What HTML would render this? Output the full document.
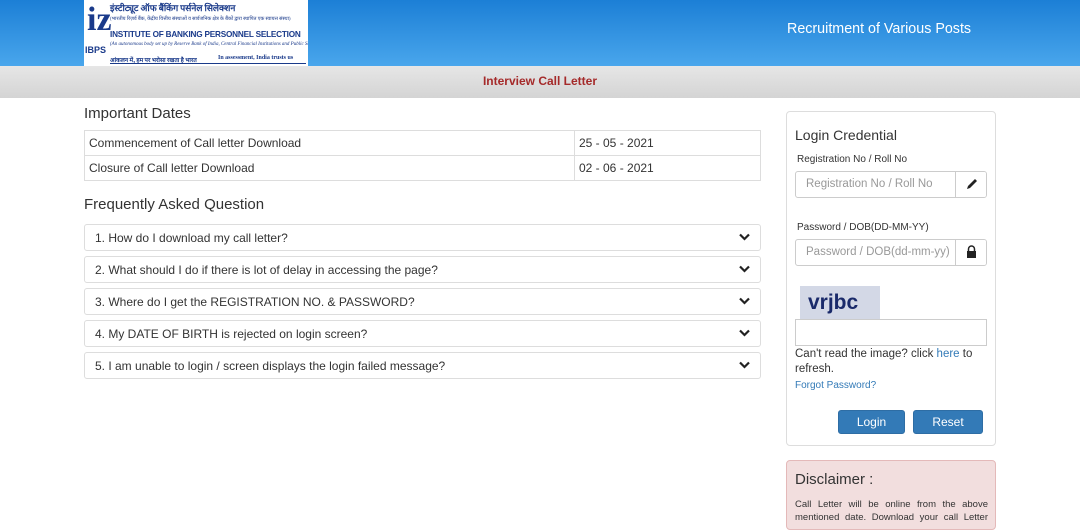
<!DOCTYPE html>
<html><head><meta charset="utf-8"><style>
*{box-sizing:border-box}
body{margin:0;width:1080px;height:520px;overflow:hidden;font-family:"Liberation Sans",Arial,sans-serif;background:#fff;color:#333}
.hdr{position:absolute;left:0;top:0;width:1080px;height:66px;background:linear-gradient(#1c7fd6,#49a6ec)}
.logo{position:absolute;left:84px;top:0;width:224px;height:66px;background:#fff;overflow:hidden}
.title{position:absolute;left:787px;top:21px;color:#fff;font-size:14.3px}
.band{position:absolute;left:0;top:66px;width:1080px;height:32px;background:linear-gradient(#e6e6e6,#d4d4d4);text-align:center;font-size:12px;font-weight:bold;color:#a52a2a;line-height:30px}
h3{position:absolute;margin:0;font-weight:normal;font-size:15px;color:#333}
table{position:absolute;left:84px;top:130px;width:677px;border-collapse:collapse;font-size:12px}
td{border:1px solid #ddd;padding:0 4px;height:25px}
.faq{position:absolute;left:84px;width:677px;height:27px;border:1px solid #ddd;border-radius:3px;font-size:12px;padding:6px 10px}
.faq svg{position:absolute;right:10px;top:8px}
.panel{position:absolute;left:786px;top:111px;width:210px;height:335px;border:1px solid #ddd;border-radius:4px}
.lbl{position:absolute;font-size:10px;left:10px}
.inp{position:absolute;left:8px;width:192px;height:27px;border:1px solid #ccc;border-radius:3px;font-size:11.5px;color:#999;padding:6px 10px;white-space:nowrap;overflow:hidden}
.inp .ic{position:absolute;right:0;top:0;width:31px;height:25px;border-left:1px solid #ccc;background:#fff}
.btn{position:absolute;top:298px;height:24px;background:#337ab7;border:1px solid #2e6da4;border-radius:3px;color:#fff;font-size:12px;text-align:center;line-height:22px}
.disc{position:absolute;left:786px;top:460px;width:210px;height:70px;background:#f2dede;border:1px solid #e4b9b9;border-radius:4px}
.lt{position:absolute;white-space:nowrap;color:#1a3a8a}
</style></head><body>
<div class="hdr"></div>
<div class="logo">
<div class="lt" style="left:3px;top:0px;font:bold 34px/40px 'Liberation Serif'">iz</div>
<div class="lt" style="left:1px;top:45px;font:bold 9px 'Liberation Sans'">IBPS</div>
<div class="lt" style="left:26px;top:1px;font:bold 9px 'Noto Sans CJK SC',sans-serif">इंस्टीट्यूट ऑफ बैंकिंग पर्सनेल सिलेक्शन</div>
<div class="lt" style="left:26px;top:16px;font:5px 'Liberation Serif'">(भारतीय रिज़र्व बैंक, केंद्रीय वित्तीय संस्थाओं व सार्वजनिक क्षेत्र के बैंकों द्वारा स्थापित एक स्वायत्त संस्था)</div>
<div class="lt" style="left:26px;top:30px;font:bold 8.2px 'Liberation Sans';letter-spacing:-.2px">INSTITUTE OF BANKING PERSONNEL SELECTION</div>
<div class="lt" style="left:26px;top:42px;font:italic 5px 'Liberation Serif'">(An autonomous body set up by Reserve Bank of India, Central Financial Institutions and Public Sector Banks)</div>
<div style="position:absolute;left:26px;top:63px;width:196px;height:1px;background:#1a3a8a"></div>
<div class="lt" style="left:26px;top:55px;font:bold 6px 'Noto Sans CJK SC',sans-serif">आंकलन में, हम पर भरोसा रखता है भारत</div>
<div class="lt" style="left:134px;top:55px;font:bold 6px 'Liberation Serif'">In assessment, India trusts us</div>
</div>
<div class="title">Recruitment of Various Posts</div>
<div class="band">Interview Call Letter</div>
<h3 style="left:84px;top:105px">Important Dates</h3>
<table><tr><td style="width:490px">Commencement of Call letter Download</td><td>25 - 05 - 2021</td></tr>
<tr><td>Closure of Call letter Download</td><td>02 - 06 - 2021</td></tr></table>
<h3 style="left:84px;top:196px">Frequently Asked Question</h3>
<div class="faq" style="top:224px">1. How do I download my call letter?<svg width="11" height="8" viewBox="0 0 11 8"><path d="M1 1.5l4.5 4.5 4.5-4.5" stroke="#222" stroke-width="2.2" fill="none"/></svg></div>
<div class="faq" style="top:256px">2. What should I do if there is lot of delay in accessing the page?<svg width="11" height="8" viewBox="0 0 11 8"><path d="M1 1.5l4.5 4.5 4.5-4.5" stroke="#222" stroke-width="2.2" fill="none"/></svg></div>
<div class="faq" style="top:288px">3. Where do I get the REGISTRATION NO. &amp; PASSWORD?<svg width="11" height="8" viewBox="0 0 11 8"><path d="M1 1.5l4.5 4.5 4.5-4.5" stroke="#222" stroke-width="2.2" fill="none"/></svg></div>
<div class="faq" style="top:320px">4. My DATE OF BIRTH is rejected on login screen?<svg width="11" height="8" viewBox="0 0 11 8"><path d="M1 1.5l4.5 4.5 4.5-4.5" stroke="#222" stroke-width="2.2" fill="none"/></svg></div>
<div class="faq" style="top:352px">5. I am unable to login / screen displays the login failed message?<svg width="11" height="8" viewBox="0 0 11 8"><path d="M1 1.5l4.5 4.5 4.5-4.5" stroke="#222" stroke-width="2.2" fill="none"/></svg></div>
<div class="panel">
<div style="position:absolute;left:8px;top:15px;font-size:14px">Login Credential</div>
<div class="lbl" style="top:42px">Registration No / Roll No</div>
<div class="inp" style="top:59px">Registration No / Roll No<div class="ic"><svg width="31" height="25" viewBox="0 0 31 25"><path d="M11 17l1-3 7-7 2 2-7 7z" fill="#222"/></svg></div></div>
<div class="lbl" style="top:110px">Password / DOB(DD-MM-YY)</div>
<div class="inp" style="top:127px">Password / DOB(dd-mm-yy)<div class="ic"><svg width="31" height="25" viewBox="0 0 31 25"><path d="M12.5 11v-2a3 3 0 016 0v2" stroke="#222" stroke-width="1.5" fill="none"/><rect x="11" y="11" width="9" height="7" fill="#222"/></svg></div></div>
<div style="position:absolute;left:13px;top:174px;width:80px;height:33px;background:#d3d8e6;font:bold 21px/33px 'Liberation Sans';color:#1a2a6a;padding-left:8px">vrjbc</div>
<div style="position:absolute;left:8px;top:207px;width:192px;height:27px;border:1px solid #ccc"></div>
<div style="position:absolute;left:8px;top:235px;font-size:11.5px;line-height:15px;width:190px">Can't read the image? click <span style="color:#337ab7">here</span> to refresh.</div>
<div style="position:absolute;left:8px;top:268px;font-size:10px;color:#337ab7">Forgot Password?</div>
<div class="btn" style="left:51px;width:67px">Login</div>
<div class="btn" style="left:126px;width:70px">Reset</div>
</div>
<div class="disc">
<div style="position:absolute;left:8px;top:10px;font-size:15px">Disclaimer :</div>
<div style="position:absolute;left:8px;top:37px;font-size:9.5px;line-height:13px;text-align:justify;text-align-last:justify;width:193px">Call Letter will be online from the above mentioned date. Download your call Letter</div>
</div>
</body></html>
